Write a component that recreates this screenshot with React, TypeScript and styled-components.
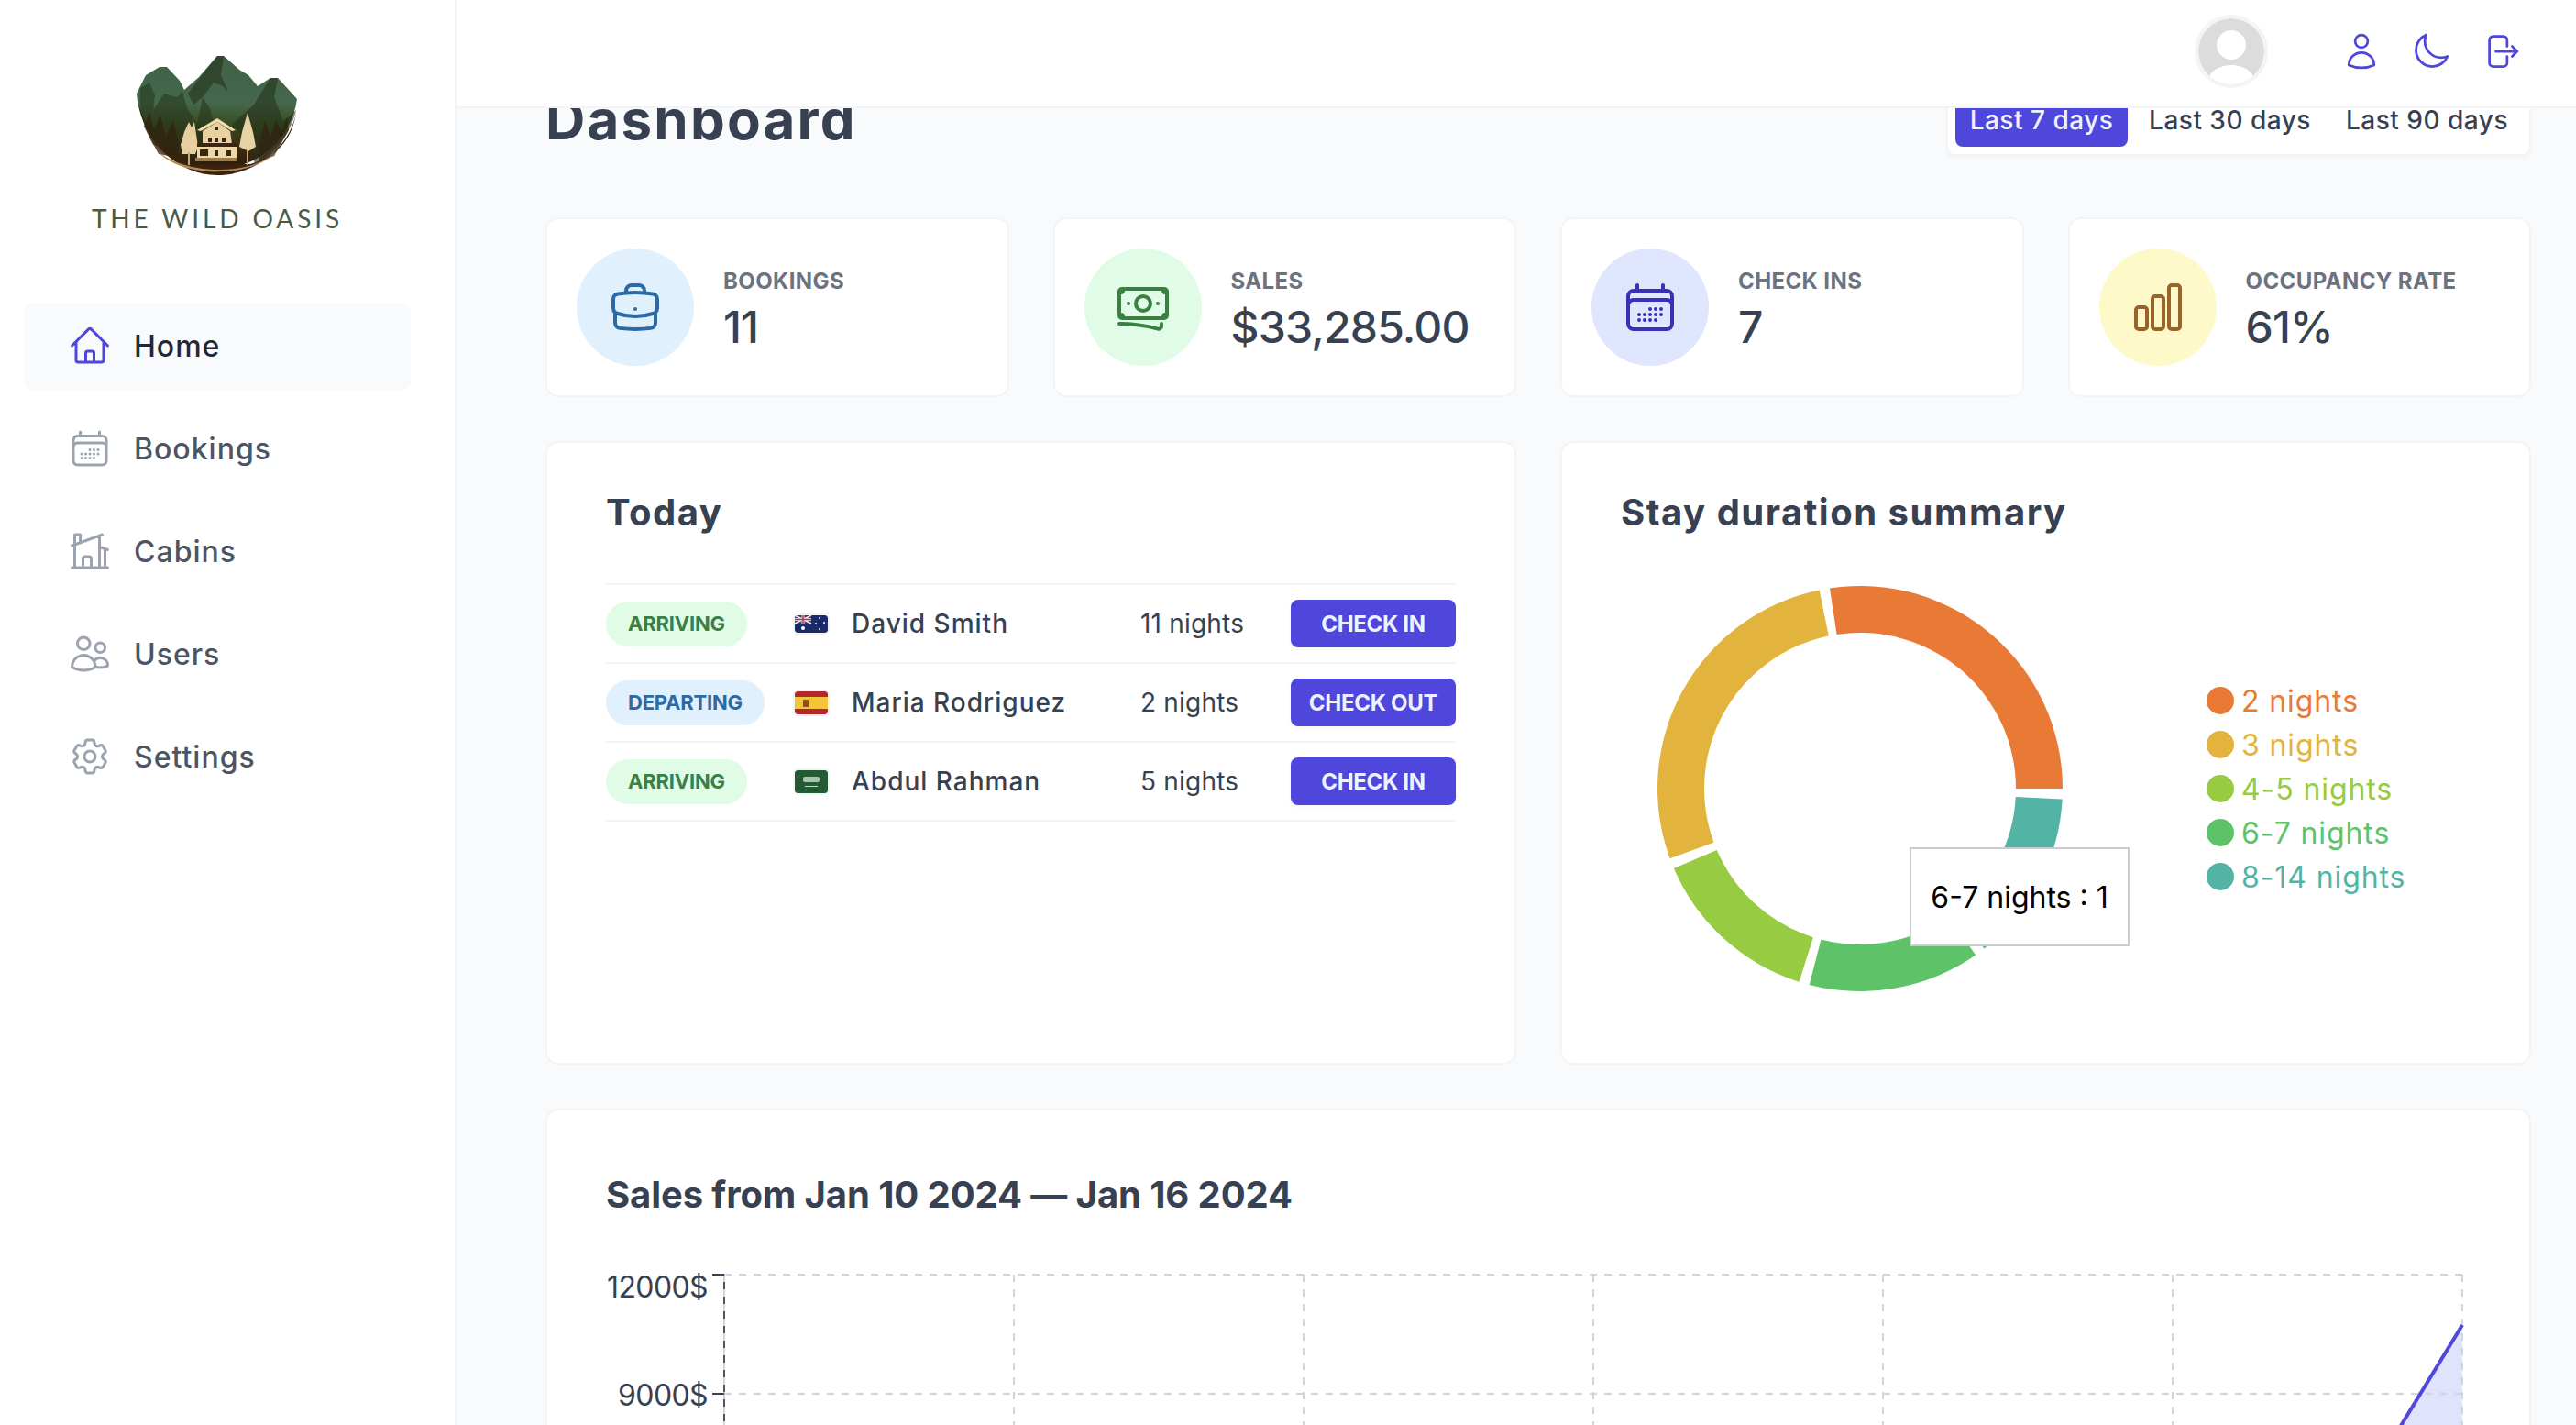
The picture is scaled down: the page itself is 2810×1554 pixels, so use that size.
import React, { useLayoutEffect, useRef } from 'react';
import styled, { createGlobalStyle } from 'styled-components';
import {
  HiOutlineArrowRightOnRectangle,
  HiOutlineBanknotes,
  HiOutlineBriefcase,
  HiOutlineCalendarDays,
  HiOutlineChartBar,
  HiOutlineCog6Tooth,
  HiOutlineHome,
  HiOutlineHomeModern,
  HiOutlineMoon,
  HiOutlineUser,
  HiOutlineUsers,
} from 'react-icons/hi2';

const BRAND = '#4f46dc';
const FONT = 'Inter, "Noto Sans", "Liberation Sans", sans-serif';

const GlobalStyle = createGlobalStyle`
  * { box-sizing: border-box; margin: 0; padding: 0; }
  html, body { height: 100%; overflow: hidden; }
  body {
    font-family: ${FONT};
    color: #374151;
    background: #f9fafb;
  }
`;

const Layout = styled.div`
  display: grid;
  grid-template-columns: 498px minmax(0, 1fr);
  grid-template-rows: 118px minmax(0, 1fr);
  height: 100vh;
`;

const Sidebar = styled.aside`
  grid-row: 1 / -1;
  background: #fff;
  border-right: 2px solid #f3f4f6;
  padding: 60px 48px 0 26px;
  display: flex;
  flex-direction: column;
`;

const Brand = styled.div`
  display: flex;
  flex-direction: column;
  align-items: center;
  height: 270px;
  width: 422px;
`;

const BrandName = styled.div`
  margin-top: 32px;
  font-family: Lato, sans-serif;
  font-size: 28px;
  line-height: 24px;
  letter-spacing: 3.9px;
  color: #4a5a44;
`;

const NavList = styled.ul`
  list-style: none;
  display: flex;
  flex-direction: column;
  gap: 16px;
`;

const NavItem = styled.li<{ $active?: boolean }>`
  display: flex;
  align-items: center;
  gap: 24px;
  height: 96px;
  padding: 0 48px 2px;
  border-radius: 10px;
  background: ${(p) => (p.$active ? '#f9fafb' : 'transparent')};
  color: ${(p) => (p.$active ? '#1f2937' : '#4b5563')};
  font-size: 32px;
  font-weight: 500;
  letter-spacing: 1px;

  svg {
    width: 48px;
    height: 48px;
    color: ${(p) => (p.$active ? BRAND : '#9ca3af')};
    flex: none;
  }
`;

const Header = styled.header`
  background: #fff;
  border-bottom: 2px solid #f3f4f6;
  display: flex;
  align-items: center;
  justify-content: flex-end;
  padding: 0 48px 4px 0;
  gap: 72px;
  z-index: 1;
`;

const Avatar = styled.svg`
  width: 72px;
  height: 72px;
  border-radius: 50%;
  outline: 4px solid #f3f4f6;
`;

const HeaderMenu = styled.div`
  display: flex;
  gap: 8px;
`;

const IconButton = styled.button`
  background: none;
  border: none;
  padding: 12px;
  display: flex;
  color: ${BRAND};

  svg {
    width: 44px;
    height: 44px;
  }
`;

const Main = styled.main`
  overflow: hidden;
  padding: 80px 49px 80px 97px;
`;

const TitleRow = styled.div`
  display: flex;
  align-items: center;
  justify-content: space-between;
  margin-bottom: 62px;
`;

const PageTitle = styled.h1`
  font-size: 60px;
  line-height: 90px;
  font-weight: 700;
  letter-spacing: 2.2px;
`;

const Filter = styled.div`
  display: flex;
  gap: 8px;
  padding: 8px;
  background: #fff;
  border: 2px solid #f3f4f6;
  border-radius: 10px;
  box-shadow: 0 2px 4px rgba(0, 0, 0, 0.04);
`;

const FilterButton = styled.button<{ $active?: boolean }>`
  border: none;
  border-radius: 8px;
  height: 60px;
  padding-top: 2px;
  width: ${(p) => (p.$active ? '188px' : '207px')};
  font-family: ${FONT};
  font-size: 28px;
  font-weight: 500;
  letter-spacing: 0.5px;
  background: ${(p) => (p.$active ? BRAND : '#fff')};
  color: ${(p) => (p.$active ? '#eef2ff' : '#374151')};
`;

const Grid = styled.div`
  display: grid;
  grid-template-columns: repeat(4, minmax(0, 1fr));
  gap: 48px;
`;

const Card = styled.section`
  background: #fff;
  border: 2px solid #f3f4f6;
  border-radius: 14px;
`;

const StatCard = styled(Card)`
  display: flex;
  align-items: center;
  gap: 32px;
  padding: 32px;
`;

const StatIcon = styled.div<{ $bg: string; $fg: string }>`
  width: 128px;
  height: 128px;
  border-radius: 50%;
  background: ${(p) => p.$bg};
  color: ${(p) => p.$fg};
  display: flex;
  align-items: center;
  justify-content: center;
  flex: none;

  svg {
    width: 64px;
    height: 64px;
  }
`;

const StatText = styled.div`
  display: flex;
  flex-direction: column;
  gap: 6px;
  padding-top: 2px;
`;

const StatLabel = styled.h5`
  font-size: 24px;
  line-height: 36px;
  font-weight: 700;
  letter-spacing: 0.4px;
  color: #6b7280;
  text-transform: uppercase;
`;

const StatValue = styled.p`
  font-size: 48px;
  line-height: 52px;
  font-weight: 500;
  letter-spacing: -0.8px;
`;

const PanelCard = styled(Card)`
  grid-column: span 2;
  padding: 46px 64px 59px;
`;

const SalesCard = styled(Card)`
  grid-column: span 4;
  padding: 62px 64px 48px;
`;

const PanelTitle = styled.h2`
  font-size: 40px;
  line-height: 60px;
  font-weight: 700;
  letter-spacing: 1.5px;
`;

const SalesTitle = styled(PanelTitle)`
  letter-spacing: -0.1px;
`;

const TodayList = styled.ul`
  list-style: none;
  margin-top: 47px;
  border-top: 2px solid #f3f4f6;
`;

const TodayRow = styled.li`
  display: grid;
  grid-template-columns: 180px 40px 1fr 140px 180px;
  column-gap: 24px;
  align-items: center;
  height: 86px;
  border-bottom: 2px solid #f3f4f6;
  font-size: 28px;
`;

const Tag = styled.span<{ $kind: 'arriving' | 'departing' }>`
  justify-self: start;
  padding: 0 24px;
  height: 49px;
  line-height: 49px;
  border-radius: 100px;
  font-size: 22px;
  font-weight: 700;
  letter-spacing: -0.2px;
  text-transform: uppercase;
  white-space: nowrap;
  background: ${(p) => (p.$kind === 'arriving' ? '#e0fbe6' : '#e0f0fd')};
  color: ${(p) => (p.$kind === 'arriving' ? '#3a7f44' : '#2b6aa4')};
`;

const Flag = styled.svg`
  width: 36px;
  justify-self: center;
  border-radius: 3px;
  outline: 2px solid #f3f4f6;
`;

const Guest = styled.div`
  font-weight: 500;
  letter-spacing: 1px;
`;

const Nights = styled.div`
  font-weight: 400;
  letter-spacing: 0.2px;
`;

const ActionButton = styled.button`
  height: 52px;
  border: none;
  border-radius: 8px;
  background: ${BRAND};
  color: #eef2ff;
  font-family: ${FONT};
  font-size: 24px;
  font-weight: 700;
  letter-spacing: -0.3px;
  text-transform: uppercase;
  box-shadow: 0 2px 4px rgba(0, 0, 0, 0.04);
`;

const DurationChart = styled.div`
  position: relative;
  display: flex;
  align-items: center;
  height: 480px;
  margin-top: 31px;
`;

const DonutSvg = styled.svg`
  width: 522px;
  height: 480px;
  flex: none;
`;

const Legend = styled.ul`
  list-style: none;
  margin-left: 117px;
  display: flex;
  flex-direction: column;
`;

const LegendItem = styled.li<{ $color: string }>`
  display: flex;
  align-items: center;
  gap: 8px;
  height: 48px;
  font-size: 32px;
  letter-spacing: 0.9px;
  color: ${(p) => p.$color};

  &::before {
    content: '';
    width: 30px;
    height: 30px;
    border-radius: 50%;
    background: ${(p) => p.$color};
  }
`;

const ChartTooltip = styled.div`
  position: absolute;
  left: 315px;
  top: 304px;
  width: 240px;
  height: 108px;
  background: #fff;
  border: 2px solid #ccc;
  color: #000;
  font-size: 32px;
  display: flex;
  align-items: center;
  justify-content: center;
  white-space: nowrap;
`;

const SalesSvg = styled.svg`
  display: block;
  width: 2034px;
  height: 620px;
  margin-top: 41px;
`;

const AxisLabel = styled.text`
  font-family: ${FONT};
  font-size: 32px;
  letter-spacing: -0.6px;
  fill: #374151;
  text-anchor: end;
`;

const Logo = () => (
  <svg width="176" height="134" viewBox="0 0 176 134">
    <defs>
      <linearGradient id="hill" x1="0" y1="0" x2="0" y2="1">
        <stop offset="0" stopColor="#3f6248" />
        <stop offset="0.42" stopColor="#45684c" />
        <stop offset="0.62" stopColor="#37491f" />
        <stop offset="0.82" stopColor="#3f2a10" />
        <stop offset="1" stopColor="#2c1a08" />
      </linearGradient>
    </defs>
    <path
      d="M0 42 L10 22 L25 13 L33 13 L47 28 L52 38 L68 24 L88 1 L95 1 L112 16 L122 22 L132 34 L146 25 L154 25 L166 38 L175 48 A88 88 0 0 1 0 42 Z"
      fill="url(#hill)"
    />
    {/* shaded rock faces */}
    <path
      d="M4 36 L14 30 L20 44 L18 60 L30 42 L44 46 L50 40 L55 58 L66 74 L72 46 L80 58 L84 74 L90 84 L62 112 L18 98 C8 80 2 60 4 36 Z"
      fill="#253318"
      opacity="0.55"
    />
    <path
      d="M88 1 L95 1 L92 22 L100 40 L94 34 L84 30 L72 46 L62 54 L56 42 L68 26 Z M146 25 L154 25 L150 46 L160 72 L174 60 C168 86 150 108 130 120 L112 84 L104 76 L128 54 Z"
      fill="#24321b"
      opacity="0.6"
    />
    {/* pine line at the foot of the hills */}
    <path
      d="M8 78 L14 62 L19 82 L26 66 L32 88 L40 72 L46 96 L46 112 L24 108 Z M134 98 L140 72 L146 90 L152 70 L158 84 L164 68 L166 82 L150 110 L134 116 Z"
      fill="#2f2410"
      opacity="0.8"
    />
    <path d="M2 52 C8 96 46 131 88 131 C130 131 168 100 174 62 C170 94 150 112 124 119 L60 119 C30 108 10 84 2 52 Z" fill="#3a230c" />
    <path d="M22 104 C50 130 124 134 154 104 C130 134 48 136 22 104 Z" fill="#b08a58" />
    <path d="M50 108 L48 98 L52 84 L57 73 L60 79 L63 73 L67 100 L64 108 Z" fill="#e6cf9f" />
    <path d="M122 105 L112 100 L115 84 L121 63 L127 84 L130 100 Z" fill="#e8d3a4" />
    <rect x="56" y="106" width="2" height="14" fill="#c3a878" />
    <rect x="120" y="104" width="2" height="16" fill="#c3a878" />
    <path d="M66 82 L88 69 L108 82 L104 83 L88 73 L70 83 Z" fill="#f0dcae" />
    <path d="M72 83 L88 73 L102 83 L104 97 L72 97 Z" fill="#e8d2a2" />
    <rect x="66" y="96" width="44" height="4" fill="#3c2510" />
    <rect x="66" y="100" width="44" height="14" fill="#ecd8a9" />
    <rect x="64" y="112" width="46" height="4" fill="#a07c4a" />
    <g fill="#3c2510">
      <rect x="85" y="78" width="4" height="4" />
      <rect x="78" y="90" width="4" height="5" />
      <rect x="85" y="90" width="4" height="5" />
      <rect x="93" y="90" width="4" height="5" />
      <rect x="69" y="103" width="9" height="7" />
      <rect x="85" y="104" width="4" height="6" />
      <rect x="98" y="104" width="5" height="6" />
    </g>
  </svg>
);

const AustraliaFlag = () => (
  <Flag height={19} viewBox="0 0 36 19">
    <rect width="36" height="19" fill="#1b2a6b" />
    <rect width="18" height="9" fill="#2a3a80" />
    <path d="M0 0 L18 9 M18 0 L0 9" stroke="#eee" strokeWidth="1.6" />
    <path d="M9 0 V9 M0 4.5 H18" stroke="#eee" strokeWidth="3" />
    <path d="M9 0 V9 M0 4.5 H18" stroke="#c8283c" strokeWidth="1.5" />
    <g fill="#fff">
      <circle cx="9" cy="14" r="2" />
      <circle cx="27" cy="3" r="1" />
      <circle cx="32" cy="8" r="1" />
      <circle cx="23" cy="9" r="1" />
      <circle cx="27" cy="15" r="1" />
    </g>
  </Flag>
);

const SpainFlag = () => (
  <Flag height={25} viewBox="0 0 36 25">
    <rect width="36" height="25" fill="#b3272d" />
    <rect y="6" width="36" height="13" fill="#f2c53d" />
    <rect x="9" y="9" width="6" height="8" rx="1" fill="#8f4a20" />
  </Flag>
);

const SaudiFlag = () => (
  <Flag height={25} viewBox="0 0 36 25">
    <rect width="36" height="25" fill="#245a33" />
    <rect x="9" y="7" width="18" height="6" rx="2" fill="#a9c3ae" />
    <rect x="11" y="17" width="14" height="1" fill="#c9d8cc" />
  </Flag>
);

// donut slices, angles run counter-clockwise from 3 o'clock like the chart lib does
const SLICES = [
  { label: '2 nights', color: '#e97a36', start: 0, end: 98.6 },
  { label: '3 nights', color: '#e2b43e', start: 101.6, end: 200.2 },
  { label: '4-5 nights', color: '#96cb42', start: 203.2, end: 252.5 },
  { label: '6-7 nights', color: '#5ec368', start: 255.5, end: 304.8 },
  { label: '8-14 nights', color: '#53b4a6', start: 307.8, end: 357 },
];

const slicePath = (start: number, end: number, cx: number, cy: number, r0: number, r1: number) => {
  const pt = (a: number, r: number) => {
    const rad = (a * Math.PI) / 180;
    return `${(cx + r * Math.cos(rad)).toFixed(2)} ${(cy - r * Math.sin(rad)).toFixed(2)}`;
  };
  const large = end - start > 180 ? 1 : 0;
  return `M${pt(start, r1)} A${r1} ${r1} 0 ${large} 0 ${pt(end, r1)} L${pt(end, r0)} A${r0} ${r0} 0 ${large} 1 ${pt(start, r0)} Z`;
};

const TODAY = [
  { status: 'arriving' as const, flag: <AustraliaFlag />, guest: 'David Smith', nights: '11 nights', action: 'Check in' },
  { status: 'departing' as const, flag: <SpainFlag />, guest: 'Maria Rodriguez', nights: '2 nights', action: 'Check out' },
  { status: 'arriving' as const, flag: <SaudiFlag />, guest: 'Abdul Rahman', nights: '5 nights', action: 'Check in' },
];

const STATS = [
  { label: 'Bookings', value: '11', bg: '#e0f0fd', fg: '#2b6aa4', icon: <HiOutlineBriefcase /> },
  { label: 'Sales', value: '$33,285.00', bg: '#e0fbe6', fg: '#3a7f44', icon: <HiOutlineBanknotes /> },
  { label: 'Check ins', value: '7', bg: '#e0e6fd', fg: '#3a30b8', icon: <HiOutlineCalendarDays /> },
  { label: 'Occupancy rate', value: '61%', bg: '#fdf9c9', fg: '#9a6428', icon: <HiOutlineChartBar /> },
];

const NAV = [
  { label: 'Home', icon: <HiOutlineHome />, active: true },
  { label: 'Bookings', icon: <HiOutlineCalendarDays /> },
  { label: 'Cabins', icon: <HiOutlineHomeModern /> },
  { label: 'Users', icon: <HiOutlineUsers /> },
  { label: 'Settings', icon: <HiOutlineCog6Tooth /> },
];

const COLUMN_X = [129, 445, 761, 1077, 1393, 1709, 2025];
const ROW_Y = [16, 146, 276, 406, 536];
const ROW_LABELS = ['12000$', '9000$', '6000$', '3000$', '0$'];

const App = () => {
  const mainRef = useRef<HTMLElement>(null);

  // the capture is taken part way down the page, the title sits under the header
  useLayoutEffect(() => {
    if (mainRef.current) mainRef.current.scrollTop = 113;
  }, []);

  return (
    <>
      <GlobalStyle />
      <Layout>
        <Sidebar>
          <Brand>
            <Logo />
            <BrandName>THE WILD OASIS</BrandName>
          </Brand>
          <nav>
            <NavList>
              {NAV.map((item) => (
                <NavItem key={item.label} $active={item.active}>
                  {item.icon}
                  {item.label}
                </NavItem>
              ))}
            </NavList>
          </nav>
        </Sidebar>

        <Header>
          <Avatar viewBox="0 0 72 72">
            <rect width="72" height="72" fill="#dcdcdc" />
            <ellipse cx="36" cy="29" rx="16" ry="16" fill="#fff" />
            <ellipse cx="36" cy="66" rx="24" ry="15" fill="#fff" />
          </Avatar>
          <HeaderMenu>
            <IconButton><HiOutlineUser /></IconButton>
            <IconButton><HiOutlineMoon /></IconButton>
            <IconButton><HiOutlineArrowRightOnRectangle /></IconButton>
          </HeaderMenu>
        </Header>

        <Main ref={mainRef}>
          <TitleRow>
            <PageTitle>Dashboard</PageTitle>
            <Filter>
              <FilterButton $active>Last 7 days</FilterButton>
              <FilterButton>Last 30 days</FilterButton>
              <FilterButton>Last 90 days</FilterButton>
            </Filter>
          </TitleRow>

          <Grid>
            {STATS.map((stat) => (
              <StatCard key={stat.label}>
                <StatIcon $bg={stat.bg} $fg={stat.fg}>{stat.icon}</StatIcon>
                <StatText>
                  <StatLabel>{stat.label}</StatLabel>
                  <StatValue>{stat.value}</StatValue>
                </StatText>
              </StatCard>
            ))}

            <PanelCard>
              <PanelTitle>Today</PanelTitle>
              <TodayList>
                {TODAY.map((row) => (
                  <TodayRow key={row.guest}>
                    <Tag $kind={row.status}>{row.status}</Tag>
                    {row.flag}
                    <Guest>{row.guest}</Guest>
                    <Nights>{row.nights}</Nights>
                    <ActionButton>{row.action}</ActionButton>
                  </TodayRow>
                ))}
              </TodayList>
            </PanelCard>

            <PanelCard>
              <PanelTitle>Stay duration summary</PanelTitle>
              <DurationChart>
                <DonutSvg viewBox="0 0 522 480">
                  {SLICES.map((s) => (
                    <path key={s.label} d={slicePath(s.start, s.end, 261, 240, 170, 221)} fill={s.color} />
                  ))}
                </DonutSvg>
                <Legend>
                  {SLICES.map((s) => (
                    <LegendItem key={s.label} $color={s.color}>{s.label}</LegendItem>
                  ))}
                </Legend>
                <ChartTooltip>6-7 nights : 1</ChartTooltip>
              </DurationChart>
            </PanelCard>

            <SalesCard>
              <SalesTitle>Sales from Jan 10 2024 — Jan 16 2024</SalesTitle>
              <SalesSvg viewBox="0 0 2034 620">
                <path d="M2025 71 L1709 589 L2025 589 Z" fill="#dfe3fb" />
                <line x1="129" y1="16" x2="129" y2="536" stroke="#4b5563" strokeWidth="2" />
                {ROW_Y.map((y) => (
                  <line key={y} x1="129" y1={y} x2="2025" y2={y} stroke="#d1d5db" strokeWidth="2" strokeDasharray="8 8" />
                ))}
                {COLUMN_X.map((x) => (
                  <line key={x} x1={x} y1="16" x2={x} y2="536" stroke="#d1d5db" strokeWidth="2" strokeDasharray="8 8" />
                ))}
                {ROW_Y.map((y, i) => (
                  <g key={y}>
                    <line x1="116" y1={y} x2="129" y2={y} stroke="#374151" strokeWidth="2" />
                    <AxisLabel x="111" y={y + (i === 0 ? 25 : 13)}>{ROW_LABELS[i]}</AxisLabel>
                  </g>
                ))}
                <line x1="2025" y1="71" x2="1709" y2="589" stroke={BRAND} strokeWidth="4" />
              </SalesSvg>
            </SalesCard>
          </Grid>
        </Main>
      </Layout>
    </>
  );
};

export default App;
